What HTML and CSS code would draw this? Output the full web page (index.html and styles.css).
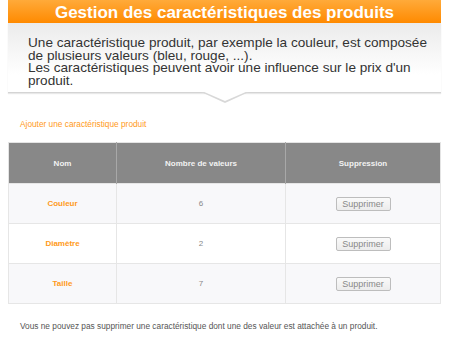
FILE: index.html
```html
<!DOCTYPE html>
<html>

<head>
    <link rel="stylesheet" href="styles.css">
</head>

<body>
    <main class="page">
        <section class="intro">
            <h1 class="intro-title">Gestion des caractéristiques des produits</h1>
            <div class="intro-body">
                <p>Une caractéristique produit, par exemple la couleur, est composée de plusieurs valeurs (bleu, rouge, ...).<br>
                Les caractéristiques peuvent avoir une influence sur le prix d'un produit.</p>
            </div>
            <div class="intro-arrow"></div>
        </section>

        <a class="add-link" href="#">Ajouter une caractéristique produit</a>

        <table class="features">
            <thead>
                <tr>
                    <!-- headers -->
                    <th class="col-name">Nom</th>
                    <th class="col-count">Nombre de valeurs</th>
                    <th class="col-del">Suppression</th>
                </tr>
            </thead>
            <tbody>
                <tr>
                    <td class="name">Couleur</td>
                    <td class="count">6</td>
                    <td><button class="del">Supprimer</button></td>
                </tr>
                <tr>
                    <td class="name">Diamètre</td>
                    <td class="count">2</td>
                    <td><button class="del">Supprimer</button></td>
                </tr>
                <tr>
                    <td class="name">Taille</td>
                    <td class="count">7</td>
                    <td><button class="del">Supprimer</button></td>
                </tr>
            </tbody>
        </table>

        <p class="note">Vous ne pouvez pas supprimer une caractéristique dont une des valeur est attachée à un produit.</p>
    </main>
</body>

</html>
```
FILE: styles.css
```css
* {
    margin: 0;
    padding: 0;
    box-sizing: border-box;
    font-family: "Liberation Sans", Arial, sans-serif;
}

body {
    background: #fff;
}

.page {
    width: 433px;
    margin-left: 8px;
}

/* intro box */
.intro {
    position: relative;
}

.intro-title {
    height: 23px;
    line-height: 25px;
    text-align: center;
    color: #fff;
    font-size: 17px;
    font-weight: bold;
    background: linear-gradient(#ffaa3a, #ff8a00);
}

.intro-body {
    height: 70px;
    padding: 14px 8px 0 20px;
    background: linear-gradient(#ebebeb, #fff 75%);
    border-bottom: 1px solid #d4d4d4;
    box-shadow: 0 1px 1px #e8e8e8;
}

.intro-body p {
    font-size: 13.6px;
    line-height: 12.6px;
    color: #333;
}

.intro-arrow {
    position: absolute;
    left: 193px;
    top: 92px;
    width: 0;
    height: 0;
    border-left: 24px solid transparent;
    border-right: 24px solid transparent;
    border-top: 11px solid #d8d8d8;
}

.intro-arrow::after {
    content: "";
    position: absolute;
    left: -23px;
    top: -12px;
    border-left: 23px solid transparent;
    border-right: 23px solid transparent;
    border-top: 10px solid #fff;
}

.add-link {
    display: block;
    margin: 26px 0 0 12px;
    font-size: 8.3px;
    color: #ff9a1a;
    text-decoration: none;
}

/* table */
.features {
    width: 100%;
    margin-top: 13px;
    border-collapse: collapse;
    border: 1px solid #e4e4e4;
}

.features th {
    height: 41px;
    background-color: #888;
    color: #f2f2f2;
    font-size: 8px;
    font-weight: bold;
    border-left: 1px solid #a8a8a8;
}

.features th:first-child {
    border-left: none;
}

.col-name {
    width: 108px;
}

.col-count {
    width: 169px;
}

.features td {
    height: 40px;
    text-align: center;
    font-size: 8px;
    color: #888;
    border: 1px solid #e6e6e6;
}

.features tbody tr:nth-child(odd) {
    background-color: #f8f8fa;
}

.features .name {
    color: #ff9a1a;
    font-weight: bold;
}

.del {
    width: 55px;
    height: 14px;
    font-size: 9px;
    color: #888;
    background: linear-gradient(#fafafa, #ececec);
    border: 1px solid #bdbdbd;
    border-radius: 2px;
}

.note {
    margin: 17px 0 0 12px;
    font-size: 8.3px;
    color: #555;
}
```
